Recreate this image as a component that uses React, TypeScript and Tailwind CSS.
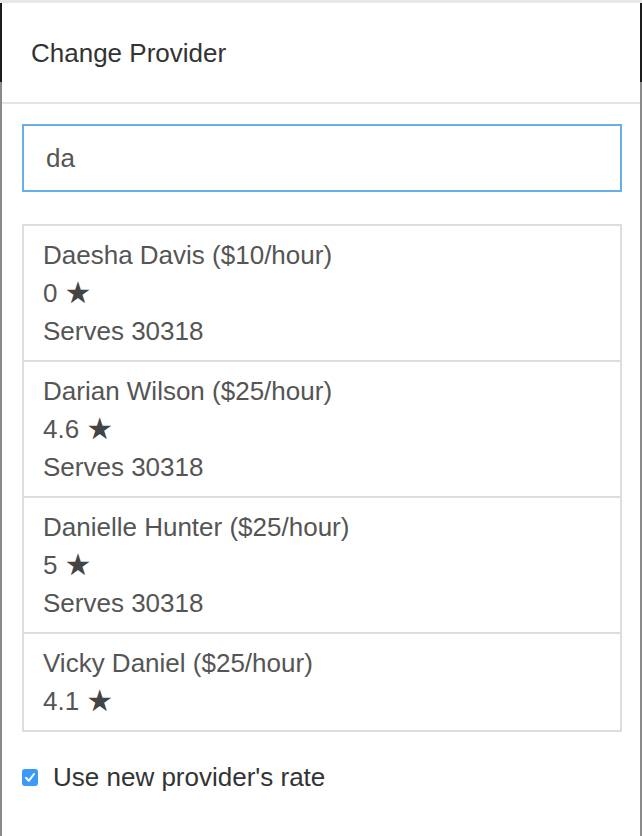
const providers = [
  { name: 'Daesha Davis', rate: '$10/hour', rating: '0', zip: '30318' },
  { name: 'Darian Wilson', rate: '$25/hour', rating: '4.6', zip: '30318' },
  { name: 'Danielle Hunter', rate: '$25/hour', rating: '5', zip: '30318' },
  { name: 'Vicky Daniel', rate: '$25/hour', rating: '4.1', zip: null },
];

function EdgeStrip() {
  return (
    <div className="w-[2px] flex flex-col shrink-0">
      <div className="h-[79px] bg-[#1c1c1c]"></div>
      <div className="flex-1 bg-[#8a8a8a]"></div>
    </div>
  );
}

export default function App() {
  return (
    <div className="w-[642px] h-[836px] bg-white flex flex-col overflow-hidden font-['Liberation_Sans',Arial,sans-serif] text-[26px] leading-[38px]">
      <div className="h-[3px] bg-[#e8e8e8] shrink-0"></div>
      <div className="flex flex-1">
        <EdgeStrip />
        <div className="flex-1 flex flex-col">
          {/* Header */}
          <div className="h-[101px] border-b-2 border-[#e5e5e5] flex items-center px-[29px] text-[#333]">
            Change Provider
          </div>

          {/* Body */}
          <div className="pl-[20px] pr-[18px] pt-[20px]">
            <div className="h-[68px] border-2 border-[#66afe9] px-[22px] flex items-center text-[#555]">
              da
            </div>

            <div className="mt-[32px] border-2 border-[#dddddd]">
              {providers.map((p, i) => (
                <div
                  key={p.name}
                  className={`px-[19px] py-[10px] text-[#555] ${i > 0 ? 'border-t-2 border-[#dddddd]' : ''}`}
                >
                  <div>
                    {p.name} ({p.rate})
                  </div>
                  <div className="flex items-center gap-[7px]">
                    <span>{p.rating}</span>
                    <span className="font-['DejaVu_Sans',sans-serif] text-[30px] leading-none text-[#444]">★</span>
                  </div>
                  {p.zip && <div>Serves {p.zip}</div>}
                </div>
              ))}
            </div>

            <div className="mt-[26px] flex items-center text-[#333]">
              <div className="w-[16px] h-[17px] rounded-[3px] bg-[#3b99fc] flex items-center justify-center shrink-0">
                <svg width="12" height="11" viewBox="0 0 12 11" fill="none">
                  <path d="M2 5.8 L4.8 8.8 L10 2" stroke="white" strokeWidth="2" strokeLinecap="round" strokeLinejoin="round" />
                </svg>
              </div>
              <span className="ml-[15px]">Use new provider's rate</span>
            </div>
          </div>
        </div>
        <EdgeStrip />
      </div>
    </div>
  );
}
